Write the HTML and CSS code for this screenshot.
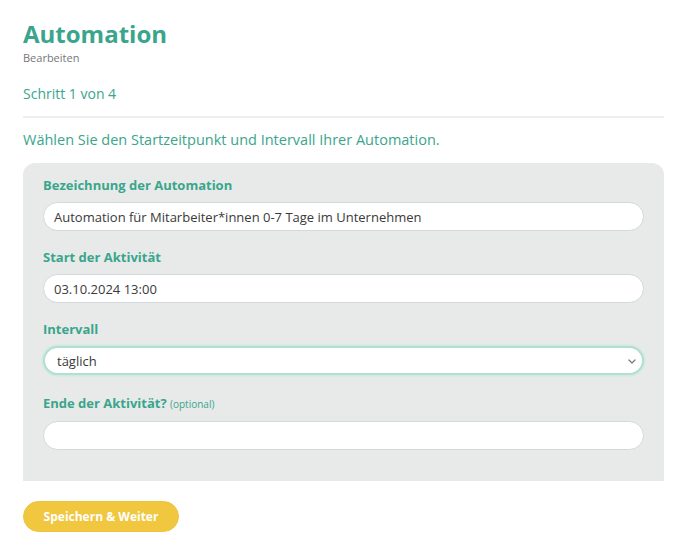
FILE: index.html
```html
<!DOCTYPE html>
<html lang="de">
<head>
    <meta charset="UTF-8">
    <meta name="viewport" content="width=device-width, initial-scale=1.0">
    <title>Automation bearbeiten</title>
    <link rel="stylesheet" href="styles.css">
</head>
<body>
    <div class="page">
        <header class="page-header">
            <h1>Automation</h1>
            <p class="subtitle">Bearbeiten</p>
        </header>

        <p class="step">Schritt 1 von 4</p>
        <hr class="divider">

        <p class="intro">Wählen Sie den Startzeitpunkt und Intervall Ihrer Automation.</p>

        <form class="panel" id="automationForm">
            <div class="form-group">
                <label for="name">Bezeichnung der Automation</label>
                <input type="text" id="name" name="name" value="Automation für Mitarbeiter*innen 0-7 Tage im Unternehmen">
            </div>

            <div class="form-group">
                <label for="start">Start der Aktivität</label>
                <input type="text" id="start" name="start" value="03.10.2024 13:00">
            </div>

            <div class="form-group form-group-select">
                <label for="interval">Intervall</label>
                <div class="select-wrap">
                    <select id="interval" name="interval" class="is-focused">
                        <option>täglich</option>
                        <option>wöchentlich</option>
                        <option>monatlich</option>
                    </select>
                    <svg class="chevron" width="8" height="5" viewBox="0 0 8 5">
                        <path d="M1 1l3 3 3-3" fill="none" stroke="#777" stroke-width="1.2" stroke-linecap="round" stroke-linejoin="round"/>
                    </svg>
                </div>
            </div>

            <div class="form-group">
                <label for="end">Ende der Aktivität? <span class="optional">(optional)</span></label>
                <input type="text" id="end" name="end">
            </div>
        </form>

        <button type="submit" form="automationForm" class="btn-primary">Speichern &amp; Weiter</button>
    </div>
</body>
</html>
```

FILE: styles.css
```css
* {
    margin: 0;
    padding: 0;
    box-sizing: border-box;
}

body {
    font-family: "Open Sans", "Liberation Sans", sans-serif;
    color: #333;
    background: #fff;
}

.page {
    width: 641px;
    margin-left: 23px;
    padding-top: 19px;
}

h1 {
    font-size: 24px;
    font-weight: 700;
    color: #3aa58c;
    line-height: 30px;
}

.subtitle {
    margin-top: 2px;
    font-size: 11px;
    color: #777;
    line-height: 14px;
}

.step {
    margin-top: 19px;
    font-size: 14px;
    color: #3aa58c;
    line-height: 20px;
}

.divider {
    border: none;
    border-top: 2px solid #eeeeee;
    margin-top: 12px;
}

.intro {
    margin-top: 12px;
    font-size: 14.5px;
    color: #3aa58c;
    line-height: 20px;
}

.panel {
    margin-top: 13px;
    background: #e7eae9;
    border-radius: 12px 12px 0 0;
    padding: 14px 20px 31px;
}

.form-group {
    margin-bottom: 18px;
}

.form-group-select {
    margin-bottom: 20px;
}

.form-group:last-child {
    margin-bottom: 0;
}

label {
    display: block;
    font-size: 13px;
    font-weight: 700;
    color: #3aa58c;
    line-height: 16px;
    margin-bottom: 9px;
}

.optional {
    font-size: 10px;
    font-weight: 400;
}

input[type="text"],
select {
    width: 100%;
    height: 29px;
    padding: 0 10px;
    border: 1px solid #d3d8dc;
    border-radius: 15px;
    background: #fff;
    font-family: inherit;
    font-size: 13px;
    color: #3a3a3a;
    outline: none;
}

.select-wrap {
    position: relative;
}

select {
    appearance: none;
    -webkit-appearance: none;
}

select.is-focused {
    padding-left: 12px;
    border: 2px solid #b3dfd3;
    box-shadow: 0 0 0 1.5px #cfeae3;
}

.chevron {
    position: absolute;
    right: 8px;
    top: 13px;
    pointer-events: none;
}

.btn-primary {
    margin-top: 20px;
    width: 156px;
    height: 31px;
    border: 1px solid #eec43a;
    border-radius: 16px;
    background: #f0c73f;
    color: #fff;
    font-family: inherit;
    font-size: 12px;
    font-weight: 700;
    cursor: pointer;
}
```
